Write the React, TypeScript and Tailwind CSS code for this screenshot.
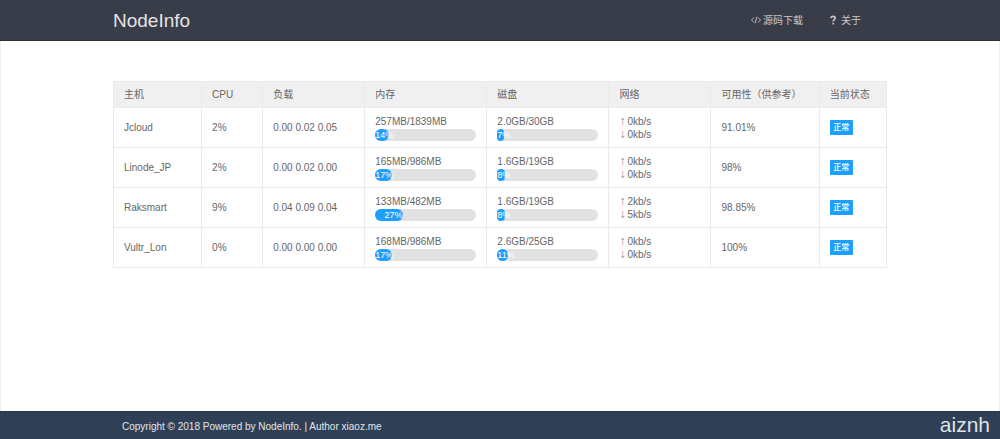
type Host = {
  name: string;
  cpu: string;
  load: string;
  memory: string;
  memoryUsed: number;
  disk: string;
  diskUsed: number;
  up: string;
  down: string;
  uptime: string;
};

const hosts: Host[] = [
  { name: 'Jcloud', cpu: '2%', load: '0.00 0.02 0.05', memory: '257MB/1839MB', memoryUsed: 14, disk: '2.0GB/30GB', diskUsed: 7, up: '0kb/s', down: '0kb/s', uptime: '91.01%' },
  { name: 'Linode_JP', cpu: '2%', load: '0.00 0.02 0.00', memory: '165MB/986MB', memoryUsed: 17, disk: '1.6GB/19GB', diskUsed: 8, up: '0kb/s', down: '0kb/s', uptime: '98%' },
  { name: 'Raksmart', cpu: '9%', load: '0.04 0.09 0.04', memory: '133MB/482MB', memoryUsed: 27, disk: '1.6GB/19GB', diskUsed: 8, up: '2kb/s', down: '5kb/s', uptime: '98.85%' },
  { name: 'Vultr_Lon', cpu: '0%', load: '0.00 0.00 0.00', memory: '168MB/986MB', memoryUsed: 17, disk: '2.6GB/25GB', diskUsed: 11, up: '0kb/s', down: '0kb/s', uptime: '100%' },
];

const headings = ['主机', 'CPU', '负载', '内存', '磁盘', '网络', '可用性（供参考）', '当前状态'];

const cell = 'border border-[#ebebeb] px-[10px]';

function Usage({ label, percent }: { label: string; percent: number }) {
  return (
    <div>
      <div className="mb-px leading-[13px]">{label}</div>
      <div className="h-3 rounded-full bg-[#e2e2e2]">
        <div
          className="h-3 rounded-full bg-[#1e9fff] text-right text-[9px] leading-3 whitespace-nowrap text-white"
          style={{ width: `${percent}%` }}
        >
          {percent}%
        </div>
      </div>
    </div>
  );
}

function Rate({ arrow, value }: { arrow: string; value: string }) {
  return (
    <div className="flex h-[13px] items-center gap-[2px] leading-[13px]">
      <span className="w-[6px] text-[12px] text-[#808080]">{arrow}</span>
      <span>{value}</span>
    </div>
  );
}

function CodeIcon() {
  return (
    <svg className="h-[10px] w-[10px]" viewBox="0 0 20 20" fill="none" stroke="currentColor" strokeWidth="1.8" aria-hidden="true">
      <path d="M6 5L1 10l5 5M14 5l5 5-5 5M11.8 3.5L8.2 16.5" />
    </svg>
  );
}

function QuestionIcon() {
  return (
    <svg className="h-[10px] w-[8px]" viewBox="0 0 16 20" fill="none" stroke="currentColor" strokeWidth="3.2" aria-hidden="true">
      <path d="M3.5 6.2C4 3.8 5.7 2.7 8 2.7c2.600 0 4.500 1.300 4.500 3.500 0 3-4.300 3-4.300 6.800M8.200 15.500v3.300" />
    </svg>
  );
}

export default function App() {
  return (
    <div className="flex min-h-screen flex-col bg-white font-['Liberation_Sans','Noto_Sans_CJK_SC',sans-serif] text-[10px] text-[#666666]">
      <header className="border-b border-[#2b2e39] bg-[#393d49]">
        <div className="mx-auto flex h-10 w-full max-w-[774px] items-center justify-between">
          <h1 className="pt-[2px] text-[19px] leading-6 text-[#e4e4e6]">NodeInfo</h1>
          <nav className="flex items-center gap-[26px] pr-[26px] text-[#c9cace]">
            <a href="#source" className="flex items-center gap-[2px]">
              <CodeIcon />
              源码下载
            </a>
            <a href="#about" className="flex items-center gap-1">
              <QuestionIcon />
              关于
            </a>
          </nav>
        </div>
      </header>

      <main className="flex-1 border-x border-[#eeeeee] pt-10 pb-10">
        <table className="mx-auto w-full max-w-[774px] table-fixed border-collapse text-left">
          <colgroup>
            <col className="w-[11.4%]" />
            <col className="w-[7.9%]" />
            <col className="w-[13.2%]" />
            <col className="w-[15.8%]" />
            <col className="w-[15.8%]" />
            <col className="w-[13.2%]" />
            <col className="w-[14%]" />
            <col className="w-[8.7%]" />
          </colgroup>
          <thead>
            <tr className="h-[26px] bg-[#f0f0f0]">
              {headings.map((heading) => (
                <th key={heading} scope="col" className={`${cell} font-normal whitespace-nowrap`}>
                  {heading}
                </th>
              ))}
            </tr>
          </thead>
          <tbody>
            {hosts.map((host) => (
              <tr key={host.name} className="h-10">
                <td className={cell}>{host.name}</td>
                <td className={cell}>{host.cpu}</td>
                <td className={cell}>{host.load}</td>
                <td className={cell}>
                  <Usage label={host.memory} percent={host.memoryUsed} />
                </td>
                <td className={cell}>
                  <Usage label={host.disk} percent={host.diskUsed} />
                </td>
                <td className={cell}>
                  <Rate arrow="↑" value={host.up} />
                  <Rate arrow="↓" value={host.down} />
                </td>
                <td className={cell}>{host.uptime}</td>
                <td className={cell}>
                  <button type="button" className="block h-[15px] w-[23px] rounded-[1px] bg-[#1e9fff] text-center text-[8px] leading-[15px] font-medium text-white">
                    正常
                  </button>
                </td>
              </tr>
            ))}
          </tbody>
        </table>
      </main>

      <footer className="relative border-t border-[#26364c] bg-[#2f4056] text-[#e2e5e9]">
        <div className="mx-auto w-full max-w-[774px] px-[9px] pt-[2px] leading-[25px]">
          Copyright © 2018 Powered by NodeInfo. | Author xiaoz.me
        </div>
        <span className="absolute right-[10px] bottom-[2px] text-[21px] leading-6 text-[#dfe2e6]">aiznh</span>
      </footer>
    </div>
  );
}
